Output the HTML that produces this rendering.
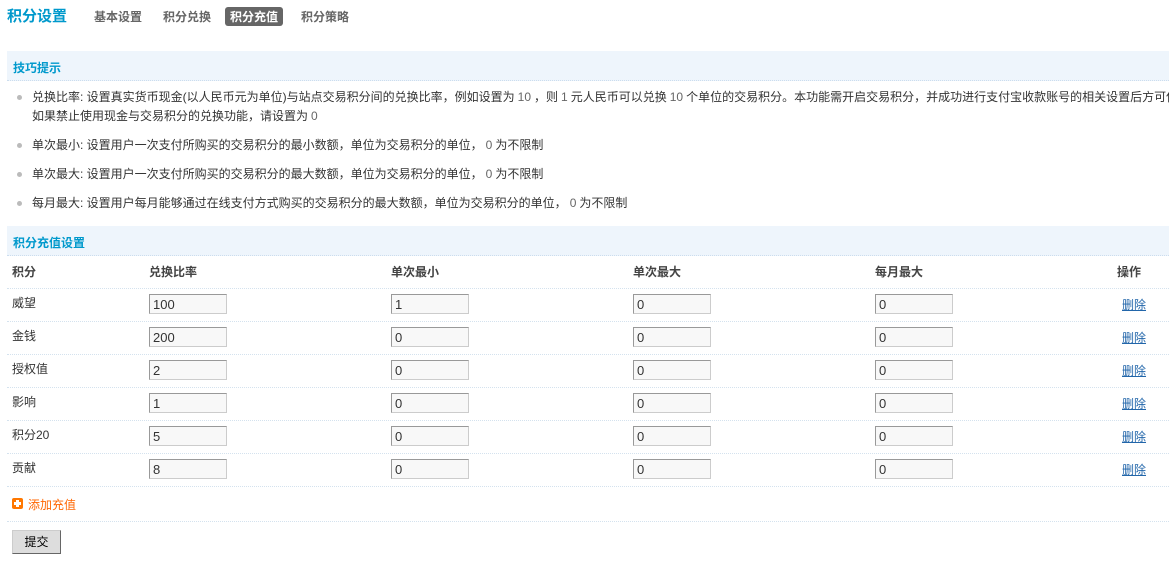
<!DOCTYPE html>
<html><head><meta charset="utf-8"><style>
*{margin:0;padding:0;box-sizing:border-box}
body{width:1169px;height:563px;overflow:hidden;background:#fff;font:12px "Liberation Sans","Noto Sans CJK SC",sans-serif;color:#333;position:relative}
.abs{position:absolute;white-space:nowrap}
.title{left:7px;top:5px;font-size:15px;font-weight:bold;color:#09c}
.nav{top:8px;font-weight:bold;color:#666;font-size:12px}
.cur{background:#666;color:#fff;border-radius:3px;padding:1px 5px}
.hd{left:7px;width:1162px;height:30px;background:#eef5fc;border-bottom:1px dotted #cde;font-weight:bold;color:#09c;padding:8px 0 0 6px}
.tip{left:32px;color:#333;line-height:19px}
.dot{position:absolute;left:-15px;top:7px;width:5px;height:5px;border-radius:50%;background:#bbb}
.n{color:#666;margin:0 3px}
.sep{left:7px;width:1162px;border-top:1px dotted #d4e2ee;height:0}
.th{top:263px;font-weight:bold;color:#444}
.inp{position:absolute;width:78px;height:20px;border:1px solid #999;border-right-color:#ccc;border-bottom-color:#ccc;background:#f8f8f8;font-size:13px;padding:2px 3px;color:#333;line-height:15px}
.del{color:#2266aa;text-decoration:underline;position:absolute;left:1122px}
</style></head><body>
<div class="abs title">积分设置</div>
<div class="abs nav" style="left:94px">基本设置</div>
<div class="abs nav" style="left:163px">积分兑换</div>
<div class="abs nav cur" style="left:225px;top:7px">积分充值</div>
<div class="abs nav" style="left:301px">积分策略</div>

<div class="abs hd" style="top:51px">技巧提示</div>
<div class="abs tip" style="top:88px"><span class="dot"></span>兑换比率: 设置真实货币现金(以人民币元为单位)与站点交易积分间的兑换比率，例如设置为<span class="n">10</span>，则<span class="n">1</span>元人民币可以兑换<span class="n">10</span>个单位的交易积分。本功能需开启交易积分，并成功进行支付宝收款账号的相关设置后方可使用<br>如果禁止使用现金与交易积分的兑换功能，请设置为<span class="n">0</span></div>
<div class="abs tip" style="top:136px"><span class="dot"></span>单次最小: 设置用户一次支付所购买的交易积分的最小数额，单位为交易积分的单位，<span class="n">0</span>为不限制</div>
<div class="abs tip" style="top:165px"><span class="dot"></span>单次最大: 设置用户一次支付所购买的交易积分的最大数额，单位为交易积分的单位，<span class="n">0</span>为不限制</div>
<div class="abs tip" style="top:194px"><span class="dot"></span>每月最大: 设置用户每月能够通过在线支付方式购买的交易积分的最大数额，单位为交易积分的单位，<span class="n">0</span>为不限制</div>

<div class="abs hd" style="top:226px">积分充值设置</div>
<div class="abs th" style="left:12px">积分</div>
<div class="abs th" style="left:149px">兑换比率</div>
<div class="abs th" style="left:391px">单次最小</div>
<div class="abs th" style="left:633px">单次最大</div>
<div class="abs th" style="left:875px">每月最大</div>
<div class="abs th" style="left:1117px">操作</div>

<div class="abs sep" style="top:288px"></div>
<div class="abs sep" style="top:321px"></div>
<div class="abs sep" style="top:354px"></div>
<div class="abs sep" style="top:387px"></div>
<div class="abs sep" style="top:420px"></div>
<div class="abs sep" style="top:453px"></div>
<div class="abs sep" style="top:486px"></div>
<div class="abs sep" style="top:521px"></div>

<div id="rows"></div>
<script>
var d=[["威望","100","1"],["金钱","200","0"],["授权值","2","0"],["影响","1","0"],["积分20","5","0"],["贡献","8","0"]];
var h="";
d.forEach(function(r,i){var t=288+i*33;
h+='<div class="abs" style="left:12px;top:'+(t+6)+'px">'+r[0]+'</div>';
h+='<div class="inp" style="left:149px;top:'+(t+6)+'px">'+r[1]+'</div>';
h+='<div class="inp" style="left:391px;top:'+(t+6)+'px">'+r[2]+'</div>';
h+='<div class="inp" style="left:633px;top:'+(t+6)+'px">0</div>';
h+='<div class="inp" style="left:875px;top:'+(t+6)+'px">0</div>';
h+='<div class="del" style="top:'+(t+8)+'px">删除</div>';});
document.getElementById("rows").innerHTML=h;
</script>
<div class="abs" style="left:12px;top:498px;width:11px;height:11px;background:#f70;border-radius:2px"><div style="position:absolute;left:2px;top:4px;width:7px;height:3px;background:#fff"></div><div style="position:absolute;left:4px;top:2px;width:3px;height:7px;background:#fff"></div></div>
<div class="abs" style="left:28px;top:496px;color:#f60">添加充值</div>
<div class="abs" style="left:12px;top:530px;width:49px;height:24px;background:#ddd;border:1px solid #ccc;border-right-color:#666;border-bottom-color:#666;text-align:center;line-height:22px;color:#000">提交</div>
</body></html>
